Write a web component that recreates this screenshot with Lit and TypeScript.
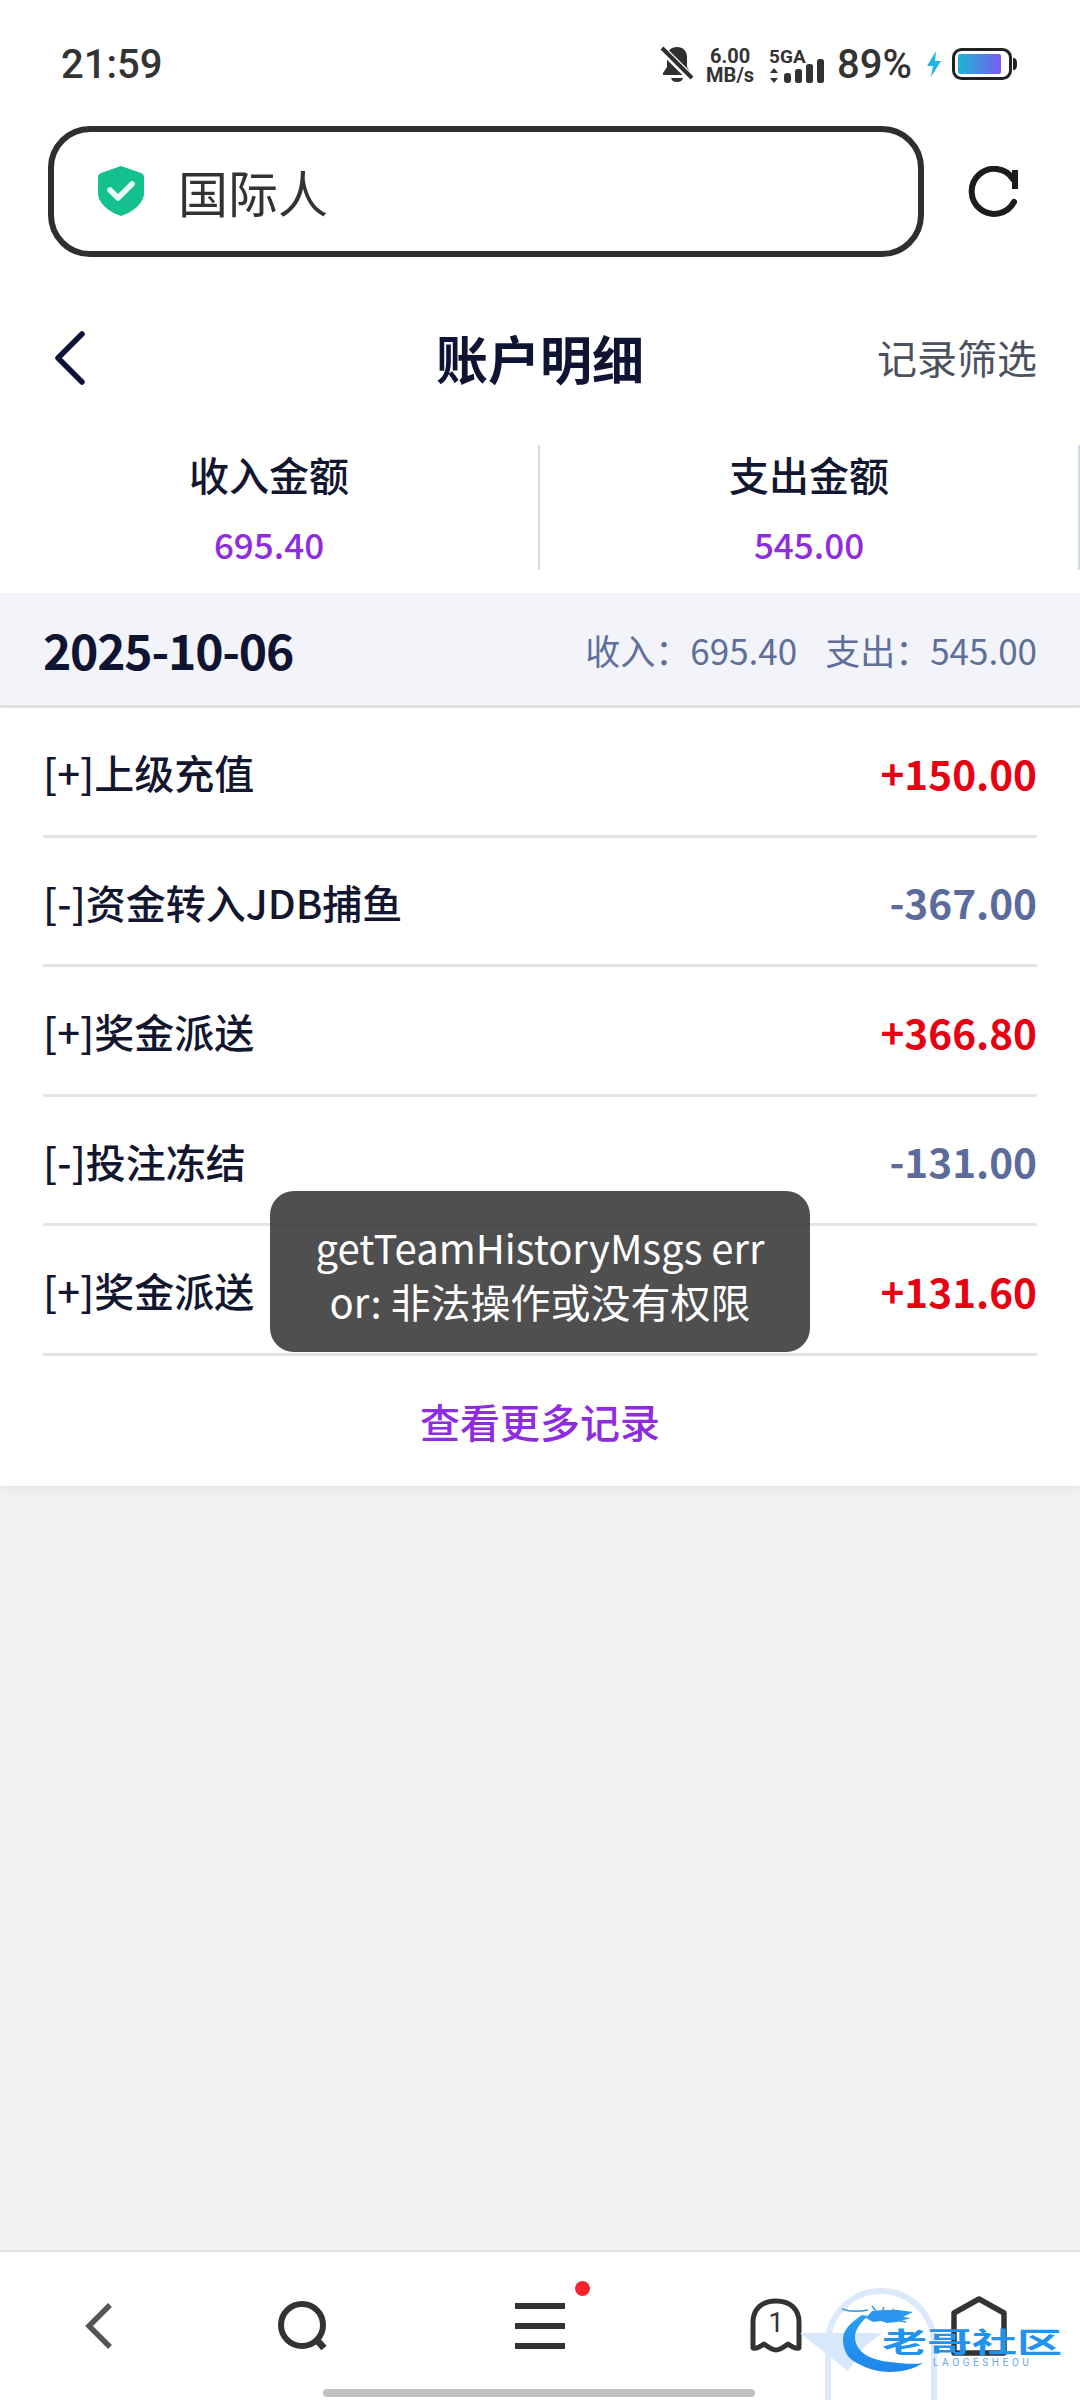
import { LitElement, css, html, svg } from "lit";
import { customElement } from "lit/decorators.js";

const rows = [
  { label: "[+]上级充值", amount: "+150.00", up: true },
  { label: "[-]资金转入JDB捕鱼", amount: "-367.00", up: false },
  { label: "[+]奖金派送", amount: "+366.80", up: true },
  { label: "[-]投注冻结", amount: "-131.00", up: false },
  { label: "[+]奖金派送", amount: "+131.60", up: true },
];

const bell = svg`<svg class="bell" width="34" height="38" viewBox="0 0 34 38">
  <path d="M17 2c-6 0-10 4-10 10v10l-4 6v2h28v-2l-4-6V12C27 6 23 2 17 2z" fill="#2f2f2f"/>
  <path d="M11 33h12c-1 3-3 4-6 4s-5-1-6-4z" fill="#2f2f2f"/>
  <path d="M1 3l31 31" stroke="#fff" stroke-width="8"/>
  <path d="M2 3l30 30" stroke="#2f2f2f" stroke-width="4"/>
</svg>`;

const signal = svg`<svg class="signal" width="56" height="24" viewBox="0 0 56 24">
  <path d="M5 9l4 5H1zM5 24l4-5H1z" fill="#333"/>
  <rect x="15" y="14" width="7" height="10" rx="3" fill="#333"/>
  <rect x="26" y="10" width="7" height="14" rx="2.500" fill="#333"/>
  <rect x="37" y="5" width="7" height="19" rx="2.500" fill="#333"/>
  <rect x="48" y="0" width="7" height="24" rx="2.500" fill="#333"/>
</svg>`;

const battery = svg`<svg width="66" height="32" viewBox="0 0 66 32">
  <defs><linearGradient id="bat" x1="0" x2="1"><stop offset="0" stop-color="#1cb6d4"/><stop offset="1" stop-color="#7a5bf2"/></linearGradient></defs>
  <rect x="1.500" y="1.500" width="57" height="29" rx="8" fill="#fff" stroke="#222" stroke-width="3"/>
  <rect x="6" y="6" width="43" height="20" rx="2" fill="url(#bat)"/>
  <path d="M61 10c3 0 4 2 4 6s-1 6-4 6z" fill="#222"/>
</svg>`;

// watermark in page coordinates, drawn over the bottom bar
const watermark = svg`<svg class="mark" width="290" height="150" viewBox="790 2250 290 150">
  <defs><linearGradient id="drag" x1="0" x2="0" y1="0" y2="1"><stop offset="0" stop-color="#2aa0f2"/><stop offset="1" stop-color="#1f86ea"/></linearGradient></defs>
  <path d="M828 2400v-56a53 53 0 0 1 106 0v56" fill="none" stroke="#dbe9fb" stroke-width="6"/>
  <path d="M800 2333h56l26 0-18 14-16 24z" fill="#d8e8fb"/>
  <path d="M862 2315c-12 8-20 16-19 26 1 12 6 18 14 22 10 6 22 9 33 9 12 0 24-3 33-9-11 2-22 0-33-1-10-1-21-4-27-9-6-5-8-11-8-16 0-7 5-14 13-21z" fill="url(#drag)"/>
  <path d="M866 2318l6-7 12-1 14 0 15 2-10 5 8 1-14 4-10 1-6-2-8 1z" fill="#2b97ee"/>
  <path d="M842 2309c8 3 16 3 26 1M872 2306l4 5M884 2307l-2 4M894 2309l-4 3M906 2322l-10-2" fill="none" stroke="#2b97ee" stroke-width="1.500"/>
</svg>`;

@customElement("app-root")
export class AppRoot extends LitElement {
  override render() {
    return html`
      <div class="status">
        <span class="time">21:59</span>
        <div class="status-right">
          ${bell}
          <div class="speed"><b>6.00</b><b>MB/s</b></div>
          <div class="net"><b>5GA</b>${signal}</div>
          <span class="pct">89%</span>
          <svg class="bolt" width="16" height="26" viewBox="0 0 16 26"><path d="M10 0L1 15h6l-2 11 10-16H9z" fill="#1fb5ea"/></svg>
          ${battery}
        </div>
      </div>

      <div class="addr-row">
        <div class="addr">
          <svg width="48" height="50" viewBox="0 0 48 50">
            <path d="M24 0l20 7c2 1 3 2 3 4v16c0 11-13 20-23 23C14 47 1 38 1 27V11c0-2 1-3 3-4z" fill="#14c08e"/>
            <path d="M13 24l8 8 14-14" fill="none" stroke="#e9fbf5" stroke-width="5.500" stroke-linecap="round" stroke-linejoin="round"/>
          </svg>
          <span>国际人</span>
        </div>
        <svg class="refresh" width="56" height="56" viewBox="0 0 56 56">
          <path d="M47 36A22.500 22.500 0 1 1 46 13" fill="none" stroke="#1c1c1c" stroke-width="6" stroke-linecap="round"/>
          <rect x="45" y="4" width="6" height="19" fill="#1c1c1c"/>
        </svg>
      </div>

      <div class="head">
        <svg width="36" height="56" viewBox="0 0 36 56"><path d="M30 4L6 28l24 24" fill="none" stroke="#10143a" stroke-width="5.500" stroke-linecap="round" stroke-linejoin="round"/></svg>
        <h1>账户明细</h1>
        <span class="filter">记录筛选</span>
      </div>

      <div class="summary">
        <div class="cell"><div class="cell-label">收入金额</div><div class="cell-value">695.40</div></div>
        <div class="cell"><div class="cell-label">支出金额</div><div class="cell-value">545.00</div></div>
      </div>

      <div class="datebar">
        <span class="date">2025-10-06</span>
        <div class="totals"><span>收入：695.40</span><span>支出：545.00</span></div>
      </div>

      <div class="list">
        ${rows.map(
          (r) => html`<div class="row">
            <span class="label">${r.label}</span>
            <span class="amount ${r.up ? "up" : "down"}">${r.amount}</span>
          </div>`
        )}
        <div class="more">查看更多记录</div>
      </div>

      <div class="fill"></div>

      <div class="nav">
        <div class="slot">
          <svg width="30" height="48" viewBox="0 0 30 48"><path d="M26 3L5 24l21 21" fill="none" stroke="#555" stroke-width="5.500"/></svg>
        </div>
        <div class="slot">
          <svg width="52" height="52" viewBox="0 0 52 52"><circle cx="25" cy="25" r="21" fill="none" stroke="#333" stroke-width="6"/><path d="M38 38l9 10" stroke="#333" stroke-width="7"/></svg>
        </div>
        <div class="slot">
          <div class="menu"><i></i><i></i><i></i></div>
        </div>
        <div class="slot">
          <div class="tabs">
            <svg width="52" height="56" viewBox="0 0 52 56"><path d="M3 50V24C3 11 12 3 26 3s23 8 23 21v26c-4 1-7-1-11-4-4 3-8 6-12 6s-8-3-12-6c-4 3-7 5-11 4z" fill="none" stroke="#333" stroke-width="5" stroke-linejoin="round"/></svg>
            <span>1</span>
          </div>
        </div>
        <div class="slot">
          <svg width="58" height="60" viewBox="0 0 58 60"><path d="M4 17L29 3l25 14v40H4z" fill="none" stroke="#333" stroke-width="5.500" stroke-linejoin="round"/></svg>
        </div>
        <div class="dot"></div>

        ${watermark}
        <span class="mark-text">老哥社区</span>
        <span class="mark-sub">LAOGESHEOU</span>

        <div class="indicator"></div>
      </div>

      <div class="toast">getTeamHistoryMsgs error: 非法操作或没有权限</div>
    `;
  }

  static override styles = css`
    :host {
      display: flex;
      flex-direction: column;
      position: relative;
      width: 1080px;
      height: 2400px;
      overflow: hidden;
      background: #f2f2f5;
      font-family: "Noto Sans CJK SC", "Noto Sans", sans-serif;
      color: #12162f;
    }

    .status {
      display: flex;
      align-items: center;
      justify-content: space-between;
      box-sizing: border-box;
      height: 126px;
      padding: 2px 62px 0 61px;
      background: #fff;
      color: #333;
      font-family: Roboto, "Noto Sans", sans-serif;
    }
    .time {
      font-size: 40px;
      font-weight: 500;
    }
    .status-right {
      display: flex;
      align-items: center;
    }
    .speed {
      display: flex;
      flex-direction: column;
      margin: 4px 0 0 12px;
      font-size: 20px;
      line-height: 19px;
      text-align: center;
    }
    .net {
      display: flex;
      flex-direction: column;
      width: 56px;
      margin: 4px 0 0 15px;
      font-size: 19px;
      line-height: 16px;
    }
    .signal {
      display: block;
      margin-top: -6px;
    }
    .pct {
      margin-left: 12px;
      font-size: 40px;
      font-weight: 500;
    }
    .bolt {
      margin: 0 10px 0 14px;
    }

    .addr-row {
      display: flex;
      align-items: center;
      height: 131px;
      padding-left: 48px;
      background: #fff;
    }
    .addr {
      display: flex;
      align-items: center;
      gap: 33px;
      box-sizing: border-box;
      width: 876px;
      height: 131px;
      padding: 0 0 2px 43px;
      border: 6px solid #2f2f2f;
      border-radius: 42px;
      font-size: 50px;
      color: #333;
    }
    .refresh {
      margin: 5px 0 0 43px;
    }

    .head {
      display: flex;
      align-items: center;
      position: relative;
      height: 166px;
      padding: 36px 43px 0 52px;
      box-sizing: border-box;
      justify-content: space-between;
      background: #fff;
    }
    h1 {
      position: absolute;
      left: 0;
      right: 0;
      margin: 0;
      text-align: center;
      font-size: 52px;
      font-weight: 700;
      line-height: 70px;
      color: #0f1433;
    }
    .filter {
      margin-top: -2px;
      font-size: 40px;
      color: #4c5160;
    }

    .summary {
      display: flex;
      height: 170px;
      box-sizing: border-box;
      padding: 22px 0 23px;
      background: #fff;
    }
    .cell {
      flex: 0 0 540px;
      box-sizing: border-box;
      border-right: 2px solid #d5d9e2;
      text-align: center;
    }
    .cell-label {
      font-size: 40px;
      font-weight: 500;
      line-height: 58px;
    }
    .cell-value {
      margin-top: 17px;
      font-size: 35px;
      font-weight: 500;
      line-height: 48px;
      color: #8f2ce0;
    }

    .datebar {
      display: flex;
      align-items: center;
      justify-content: space-between;
      box-sizing: border-box;
      height: 115px;
      padding: 0 43px;
      background: #f2f4f9;
      border-bottom: 3px solid #e2e2e4;
    }
    .date {
      font-size: 48px;
      font-weight: 700;
      letter-spacing: -1.2px;
      color: #0f1433;
    }
    .totals {
      display: flex;
      gap: 28px;
      font-size: 35px;
      color: #5f6f9a;
    }

    .list {
      padding: 0 43px;
      background: #fff;
      box-shadow: 0 4px 12px rgba(0, 0, 0, 0.06);
    }
    .row {
      display: flex;
      align-items: center;
      justify-content: space-between;
      box-sizing: border-box;
      height: 129.5px;
      padding-top: 2px;
      border-bottom: 3px solid #e2e2e4;
    }
    .label {
      font-size: 40px;
      font-weight: 500;
    }
    .amount {
      font-size: 40.5px;
      font-weight: 700;
    }
    .up {
      color: #e60012;
    }
    .down {
      color: #5b6b9b;
    }
    .more {
      height: 130px;
      line-height: 130px;
      text-align: center;
      font-size: 40px;
      font-weight: 500;
      color: #8f2ce0;
    }

    .fill {
      flex: 1;
    }

    .nav {
      display: grid;
      grid-template-columns: 198px 210px 264px 208px 198px;
      position: relative;
      box-sizing: border-box;
      height: 150px;
      padding: 44px 0;
      background: #fff;
      border-top: 2px solid #e4e4e6;
      align-items: center;
    }
    .slot {
      display: flex;
      justify-content: center;
      align-items: center;
    }
    .menu {
      display: flex;
      flex-direction: column;
      gap: 14px;
      width: 50px;
    }
    .menu i {
      display: block;
      height: 6px;
      background: #333;
    }
    .tabs {
      position: relative;
      display: flex;
      justify-content: center;
    }
    .tabs span {
      position: absolute;
      top: 7px;
      font-family: Roboto, sans-serif;
      font-size: 28px;
      line-height: 36px;
      color: #333;
    }
    .dot {
      position: absolute;
      left: 575px;
      top: 29px;
      width: 15px;
      height: 15px;
      border-radius: 50%;
      background: #f5222d;
    }
    .mark {
      position: absolute;
      left: 790px;
      top: -2px;
    }
    .mark-text {
      position: absolute;
      left: 882px;
      top: 75px;
      font-size: 45px;
      line-height: 28px;
      font-weight: 700;
      white-space: nowrap;
      color: #2192ee;
      transform: scaleY(0.62);
    }
    .mark-sub {
      position: absolute;
      left: 933px;
      top: 105px;
      font-family: Roboto, sans-serif;
      font-size: 10px;
      line-height: 12px;
      letter-spacing: 3.6px;
      color: #6aa8e0;
    }
    .indicator {
      position: absolute;
      left: 323px;
      top: 137px;
      width: 432px;
      height: 8px;
      border-radius: 4px;
      background: #c0c0c0;
    }

    .toast {
      position: absolute;
      left: 270px;
      top: 1191px;
      box-sizing: border-box;
      width: 540px;
      height: 161px;
      padding: 29px 36px 0;
      border-radius: 24px;
      background: rgba(50, 50, 50, 0.86);
      color: #fff;
      font-size: 40px;
      line-height: 54px;
      text-align: center;
      word-break: break-all;
    }
  `;
}
